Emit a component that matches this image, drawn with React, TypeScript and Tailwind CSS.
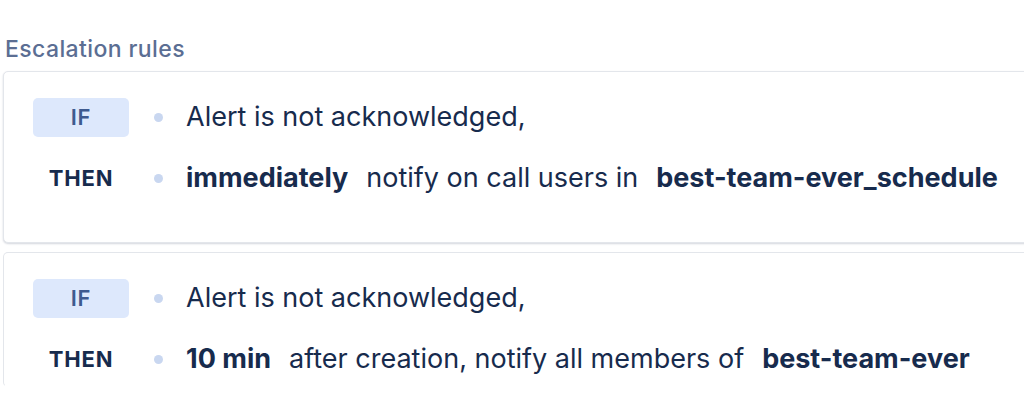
import { FC, ReactNode } from "react";

type Rule = {
  condition: string;
  action: ReactNode;
};

const rules: Rule[] = [
  {
    condition: "Alert is not acknowledged,",
    action: (
      <>
        <span className="font-bold">immediately</span>
        <span>notify on call users in</span>
        <span className="font-bold">best-team-ever_schedule</span>
      </>
    ),
  },
  {
    condition: "Alert is not acknowledged,",
    action: (
      <>
        <span className="font-bold">10 min</span>
        <span>after creation, notify all members of</span>
        <span className="font-bold">best-team-ever</span>
      </>
    ),
  },
];

const Dot: FC = () => (
  <span className="block w-[9px] h-[9px] rounded-full bg-[#c9d7f0] shrink-0" />
);

const RuleRow: FC<{ label: string; badge?: boolean; children: ReactNode }> = ({
  label,
  badge,
  children,
}) => (
  <div className="flex items-center h-[39px]">
    <div
      className={`w-[96px] h-[39px] flex items-center justify-center rounded-[5px] text-[22px] tracking-[0.8px] ${
        badge ? "bg-[#dde8fc] text-[#3e5a8f] font-semibold" : "text-[#172b4d] font-bold"
      }`}
    >
      {label}
    </div>
    <div className="ml-[25px] mr-[23px]">
      <Dot />
    </div>
    <div className="flex items-center gap-[18px] text-[27px] text-[#172b4d] whitespace-nowrap">
      {children}
    </div>
  </div>
);

const App: FC = () => {
  return (
    <div
      className="w-[1024px] h-[419px] overflow-hidden bg-white"
      style={{ fontFamily: "Inter, 'Noto Sans', sans-serif" }}
    >
      <h2 className="pl-[5px] pt-[36px] text-[23px] leading-[26px] tracking-[0.4px] font-medium text-[#5b6e93]">
        Escalation rules
      </h2>
      <div className="ml-[3px] w-[1060px] mt-[9px] flex flex-col gap-[9px]">
        {rules.map((rule, i) => (
          <div
            key={i}
            className={`bg-white rounded-[5px] border border-[#e3e6eb] pl-[29px] pt-[26px] flex flex-col gap-[22px] ${
              i === 0
                ? "h-[172px] shadow-[0_1px_2px_rgba(9,30,66,0.18)]"
                : "h-[135px] border-b-transparent"
            }`}
          >
            <RuleRow label="IF" badge>
              <span>{rule.condition}</span>
            </RuleRow>
            <RuleRow label="THEN">{rule.action}</RuleRow>
          </div>
        ))}
      </div>
    </div>
  );
};

export default App;
